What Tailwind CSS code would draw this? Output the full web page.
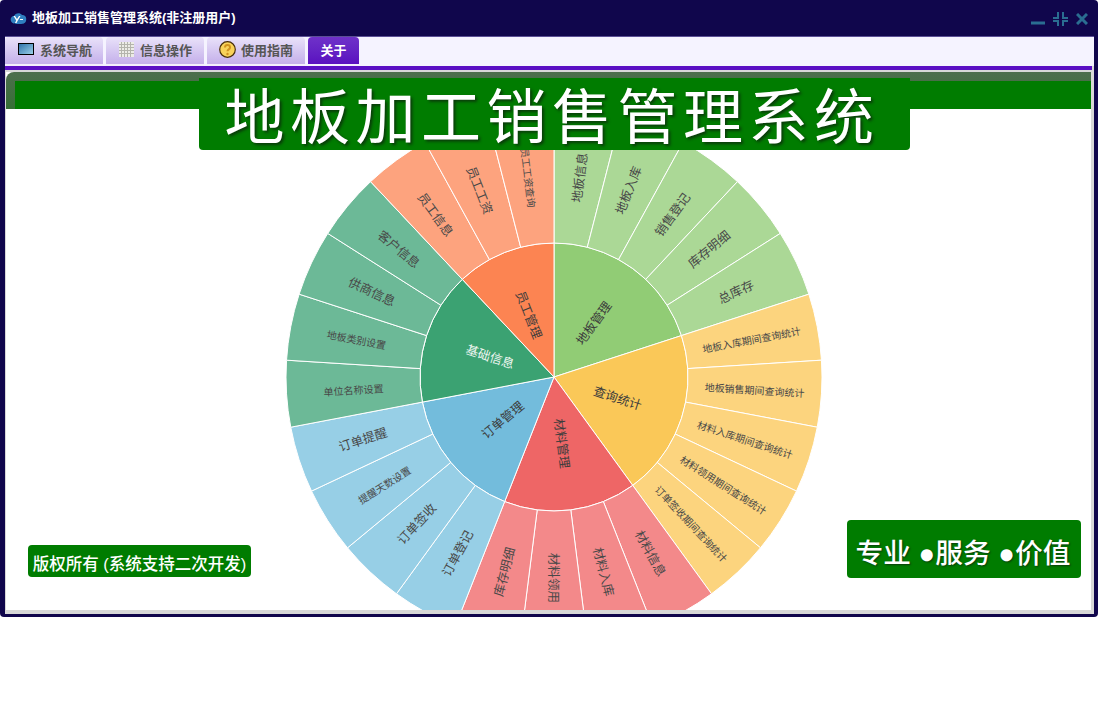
<!DOCTYPE html>
<html lang="zh-CN">
<head>
    <meta charset="UTF-8">
    <title>地板加工销售管理系统</title>
    <script src="https://cdn.jsdelivr.net/npm/@tailwindcss/browser@4"></script>
</head>
<body class="bg-white font-['Liberation_Sans','Noto_Sans_CJK_SC',sans-serif]">

    <!-- Window -->
    <div class="w-[1098px] h-[617px] bg-[#10064c] rounded-[4px] flex flex-col overflow-hidden">

        <!-- Title bar -->
        <header class="h-9 shrink-0 flex items-center pl-[10px] pr-[10px]">
            <svg width="17" height="14" viewBox="0 0 17 14" class="mr-[5px]">
                <path d="M1 10c-1-3 1-5 3-5 1-3 6-4 8-1 3 0 5 2 4 6-1 3-4 3-7 3s-7 0-8-3z" fill="#2f7fc0"/>
                <path d="M5 5l2 3 2-3h1.500l-3 5-1 2H5l1.200-2.500L3.500 5zM10 8h3v1h-3z" fill="#fff"/>
            </svg>
            <span class="text-[13px] font-bold text-white">地板加工销售管理系统(非注册用户)</span>
            <div class="ml-auto flex items-start gap-[8px] mt-[1px]">
                <svg width="14" height="14" viewBox="0 0 14 14"><path d="M0 9.500h14v3H0z" fill="#2a6d91"/></svg>
                <svg width="15" height="14" viewBox="0 0 15 14" fill="#2a6d91"><path d="M4 0h2v7H0V5h4zM9 0h2v5h4v2H9zM0 8h6v6H4v-4H0zM9 8h6v2h-4v4H9z"/></svg>
                <svg width="12" height="12" viewBox="0 0 12 12" class="mt-[1px]"><path d="M1 1l10 10M11 1L1 11" stroke="#2a6d91" stroke-width="3"/></svg>
            </div>
        </header>

        <!-- Body -->
        <div class="ml-[5px] w-[1089px] flex-1 flex flex-col bg-[#d8d8d8] pl-[1px] pr-[3px] pb-[4px] mb-[3px]">

            <!-- Tabs -->
            <nav class="h-[30px] shrink-0 -ml-[1px] -mr-[3px] bg-[#f5f3ff] flex gap-[3px] border-t border-[#5b4f96]">
                <a class="w-[98px] rounded-t-[4px] bg-gradient-to-b from-[#e9e2f9] to-[#c4afea] border-b-2 border-[#f3eefc] flex items-center pl-[13px] gap-[6px] text-[13px] font-semibold text-[#555]">
                    <svg width="16" height="13" viewBox="0 0 16 13" class="-mt-[3px]">
                        <defs><linearGradient id="scr" x1="0" y1="0" x2="1" y2="1"><stop offset="0" stop-color="#2b6fa8"/><stop offset="1" stop-color="#9fd4ea"/></linearGradient></defs>
                        <rect x="0.500" y="0.500" width="15" height="11" fill="url(#scr)" stroke="#000"/>
                    </svg>
                    <span>系统导航</span>
                </a>
                <a class="w-[98px] rounded-t-[4px] bg-gradient-to-b from-[#e9e2f9] to-[#c4afea] border-b-2 border-[#f3eefc] flex items-center pl-[13px] gap-[6px] text-[13px] font-semibold text-[#555]">
                    <svg width="15" height="15" viewBox="0 0 15 15" class="-mt-[3px]">
                        <rect width="15" height="15" fill="#ecece6"/>
                        <path d="M2.500 0v15M5.500 0v15M8.500 0v15M11.500 0v15M0 2.500h15M0 5.500h15M0 8.500h15M0 11.500h15" stroke="#b4b4ac"/>
                    </svg>
                    <span>信息操作</span>
                </a>
                <a class="w-[98px] rounded-t-[4px] bg-gradient-to-b from-[#e9e2f9] to-[#c4afea] border-b-2 border-[#f3eefc] flex items-center pl-[12px] gap-[5px] text-[13px] font-semibold text-[#555]">
                    <svg width="17" height="17" viewBox="0 0 17 17" class="-mt-[3px]">
                        <circle cx="8.500" cy="8.500" r="7.800" fill="#f8d25a" stroke="#4a300c" stroke-width="1.200"/>
                        <path d="M6 6.500c0-3.200 5-3.200 5 0 0 2-2.500 1.800-2.500 3.800" fill="none" stroke="#d0921f" stroke-width="2"/>
                        <circle cx="8.500" cy="13" r="1.200" fill="#d0921f"/>
                    </svg>
                    <span>使用指南</span>
                </a>
                <a class="w-[51px] rounded-t-[4px] bg-gradient-to-b from-[#6f31c9] to-[#5a0fc0] border-b-2 border-[#f3eefc] flex items-center justify-center text-[13px] font-semibold text-white">关于</a>
            </nav>
            <div class="h-[4px] shrink-0 -ml-[1px] -mr-[1px] bg-[#5a0fc4]"></div>

            <!-- Page -->
            <main class="relative flex-1 mt-[2px] bg-white overflow-hidden">
                <div class="h-[37px] rounded-tl-lg bg-gradient-to-b from-[#4d6e4d] to-[#356f35] pl-[9px] pt-[9px]">
                    <div class="h-[28px] bg-[#007c00]"></div>
                </div>

                <svg id="chart" width="1085" height="538" viewBox="6 72 1085 538" class="absolute left-0 top-0"></svg>

                <div class="absolute left-[193px] top-[6px] w-[711px] h-[72px] bg-[#007c00] rounded-b-[4px] flex items-center justify-center pt-[10px] pr-[5px] text-[60px] leading-none tracking-[5.5px] text-white [text-shadow:2px_2px_3px_#0a3a0a]">地板加工销售管理系统</div>
                <div class="absolute left-[22px] top-[473px] w-[223px] h-[32px] bg-[#007c00] rounded-[4px] flex items-center justify-center pt-[6px] text-[16.5px] leading-none font-medium text-white whitespace-nowrap">版权所有 (系统支持二次开发)</div>
                <div class="absolute left-[841px] top-[448px] w-[234px] h-[58px] bg-[#007c00] rounded-[4px] flex items-center justify-center pt-[10px] pr-[2px] text-[27.7px] leading-none font-medium text-white whitespace-nowrap [text-shadow:1px_1px_2px_#0a3a0a]">专业 ●服务 ●价值</div>
            </main>
        </div>
    </div>

    <!-- Chart Script -->
    <script>
        const cx = 554, cy = 377, r0 = 134, r1 = 268, step = 14.4;
        const groups = [
            { name: '地板管理', color: '#91cc75', light: '#abd896', kids: ['地板信息', '地板入库', '销售登记', '库存明细', '总库存'] },
            { name: '查询统计', color: '#fac858', light: '#fcd47e', kids: ['地板入库期间查询统计', '地板销售期间查询统计', '材料入库期间查询统计', '材料领用期间查询统计', '订单签收期间查询统计'] },
            { name: '材料管理', color: '#ee6666', light: '#f3898a', kids: ['材料信息', '材料入库', '材料领用', '库存明细'] },
            { name: '订单管理', color: '#73bcdc', light: '#97cfe6', kids: ['订单登记', '订单签收', '提醒天数设置', '订单提醒'] },
            { name: '基础信息', color: '#3ba272', light: '#6cb997', kids: ['单位名称设置', '地板类别设置', '供商信息', '客户信息'] },
            { name: '员工管理', color: '#fc8452', light: '#fda37e', kids: ['员工信息', '员工工资', '员工工资查询'] }
        ];
        const chart = document.getElementById('chart');
        const ns = 'http://www.w3.org/2000/svg';

        function pt(r, deg) {
            const a = deg * Math.PI / 180;
            return [cx + r * Math.sin(a), cy - r * Math.cos(a)];
        }
        function sector(a, b, ra, rb, fill) {
            const p1 = pt(ra, a), p2 = pt(rb, a), p3 = pt(rb, b), p4 = pt(ra, b);
            const el = document.createElementNS(ns, 'path');
            let d = 'M' + p1 + 'L' + p2 + 'A' + rb + ',' + rb + ' 0 0 1 ' + p3 + 'L' + p4;
            if (ra > 0) d += 'A' + ra + ',' + ra + ' 0 0 0 ' + p1;
            el.setAttribute('d', d + 'Z');
            el.setAttribute('fill', fill);
            el.setAttribute('stroke', '#fff');
            el.setAttribute('stroke-width', '1');
            chart.appendChild(el);
        }
        function label(txt, mid, r, size, fill) {
            const p = pt(r, mid);
            // the label at exactly 180 deg reads downwards
            const rot = mid < 180.5 ? mid - 90 : mid - 270;
            const el = document.createElementNS(ns, 'text');
            el.textContent = txt;
            el.setAttribute('x', p[0]);
            el.setAttribute('y', p[1]);
            el.setAttribute('dy', '1');
            el.setAttribute('font-size', size);
            el.setAttribute('fill', fill);
            el.setAttribute('text-anchor', 'middle');
            el.setAttribute('dominant-baseline', 'central');
            el.setAttribute('transform', 'rotate(' + rot + ' ' + p[0] + ' ' + p[1] + ')');
            chart.appendChild(el);
        }

        let angle = 0;
        groups.forEach(g => {
            const start = angle;
            const end = start + g.kids.length * step;
            sector(start, end, 0, r0, g.color);
            g.kids.forEach((k, i) => sector(start + i * step, start + (i + 1) * step, r0, r1, g.light));
            angle = end;
        });
        angle = 0;
        groups.forEach(g => {
            const span = g.kids.length * step;
            label(g.name, angle + span / 2, 67, 12.5, g.name === '基础信息' ? '#eef6f1' : '#3c3c3c');
            g.kids.forEach((k, i) => label(k, angle + (i + 0.5) * step, 201, k.length > 5 ? 10 : 12.5, '#484848'));
            angle += span;
        });
    </script>

</body>
</html>
